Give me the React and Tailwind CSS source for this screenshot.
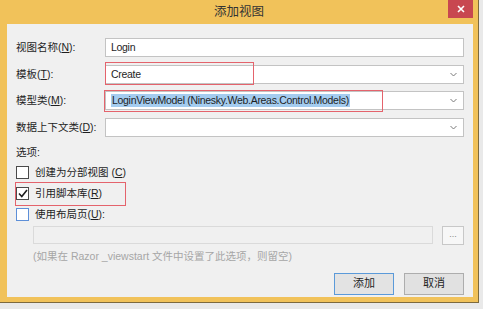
import React from "react";

const font = { fontFamily: '"Liberation Sans", "Noto Sans CJK SC", sans-serif' };

const Chevron = () => (
  <svg width="7" height="5" viewBox="0 0 7 5" className="shrink-0">
    <path d="M0.5 1 L3.5 4 L6.5 1" fill="none" stroke="#7a7a7a" strokeWidth="1" />
  </svg>
);

const Field = ({ label, hotkey, children, select, highlight }) => (
  <div className="flex items-center h-[19px]">
    <div className="w-[89px] shrink-0 whitespace-nowrap text-[10.5px] leading-none text-[#1e1e1e]">
      {label}(<span className="underline">{hotkey}</span>):
    </div>
    <div className="relative flex-1 h-[19px] bg-white border border-[#c3c3c3] flex items-center pl-[5px] pr-[6px] text-[10.5px] tracking-[-0.3px] leading-none text-[#1e1e1e]">
      <div className="flex-1 flex items-center whitespace-nowrap">{children}</div>
      {select && <Chevron />}
      {highlight}
    </div>
  </div>
);

const Check = ({ checked, blue }) => (
  <div
    className={`w-[13px] h-[13px] shrink-0 bg-white border flex items-center justify-center ${
      blue ? "border-[#5d8fd8]" : "border-[#4a4a4a]"
    }`}
  >
    {checked && (
      <svg width="10" height="9" viewBox="0 0 10 9">
        <path d="M1 4.5 L3.8 7.5 L9 1" fill="none" stroke="#1e1e1e" strokeWidth="1.6" />
      </svg>
    )}
  </div>
);

export default function App() {
  return (
    <div className="w-[483px] h-[309px] bg-[#e9e9e9] overflow-hidden" style={font}>
      <div className="w-[479px] h-[303px] bg-[#f1c25a] border-r border-b border-[#7d6a3e] flex flex-col">
        <div className="relative h-[24px] flex items-center justify-center text-[12.5px] text-[#333]">
          添加视图
          <div className="absolute right-[5px] top-0 w-[25px] h-[18px] bg-[#c84750] flex items-center justify-center">
            <svg width="8" height="8" viewBox="0 0 8 8">
              <path d="M1 1 L7 7 M7 1 L1 7" stroke="#fff" strokeWidth="1.6" />
            </svg>
          </div>
        </div>
        <div className="ml-[7px] mr-[5px] flex-1 mb-[5px] bg-[#f0f0f0] flex flex-col pl-[9px] pr-[9px] pt-[14px]">
          <div className="flex flex-col gap-[7.5px]">
            <Field label="视图名称" hotkey="N">
              Login
            </Field>
            <Field
              label="模板"
              hotkey="T"
              select
              highlight={
                <div className="absolute left-[-1px] top-[-4px] w-[149px] h-[23px] border-[1.5px] border-solid border-[#e4636c]" />
              }
            >
              Create
            </Field>
            <Field
              label="模型类"
              hotkey="M"
              select
              highlight={
                <div className="absolute left-[-2px] top-[-2px] w-[279px] h-[22px] border-[1.5px] border-solid border-[#e4636c]" />
              }
            >
              <span className="bg-[#a4ccef] px-[1px] py-[1px]">
                LoginViewModel (Ninesky.Web.Areas.Control.Models)
              </span>
            </Field>
            <Field label="数据上下文类" hotkey="D" select />
          </div>

          <div className="mt-[9px] text-[10.5px] leading-[13px] text-[#1e1e1e]">选项:</div>

          <div className="mt-[7px] flex flex-col gap-[8px] text-[10.5px] leading-none text-[#1e1e1e]">
            <div className="flex items-center gap-[6px] h-[13px]">
              <Check />
              <span>
                创建为分部视图 (<span className="underline">C</span>)
              </span>
            </div>
            <div className="relative flex items-center gap-[6px] h-[13px]">
              <Check checked />
              <span>
                引用脚本库(<span className="underline">R</span>)
              </span>
              <div className="absolute left-[-1px] top-[-5px] w-[111px] h-[24px] border-[1.5px] border-solid border-[#e4636c]" />
            </div>
            <div className="flex items-center gap-[6px] h-[13px]">
              <Check blue />
              <span>
                使用布局页(<span className="underline">U</span>):
              </span>
            </div>
          </div>

          <div className="mt-[5px] ml-[17px] flex items-center gap-[9px]">
            <div className="flex-1 h-[18px] bg-[#f0f0f0] border border-[#dadada]" />
            <div className="w-[22px] h-[19px] bg-[#f7f7f7] border border-[#c8c8c8] flex items-center justify-center text-[9px] leading-none text-[#888] pb-[2px]">
              ...
            </div>
          </div>

          <div className="mt-[5px] ml-[17px] text-[10.5px] leading-[13px] text-[#a6a6a6] whitespace-nowrap">
            (如果在 Razor _viewstart 文件中设置了此选项，则留空)
          </div>

          <div className="mt-[10px] flex justify-end gap-[10px] text-[11px] leading-none text-[#1e1e1e]">
            <div className="w-[60px] h-[22px] bg-[#e3e3e3] border border-[#5b9ad9] flex items-center justify-center">
              添加
            </div>
            <div className="w-[60px] h-[22px] bg-[#e1e1e1] border border-[#adadad] flex items-center justify-center">
              取消
            </div>
          </div>
        </div>
      </div>
    </div>
  );
}
